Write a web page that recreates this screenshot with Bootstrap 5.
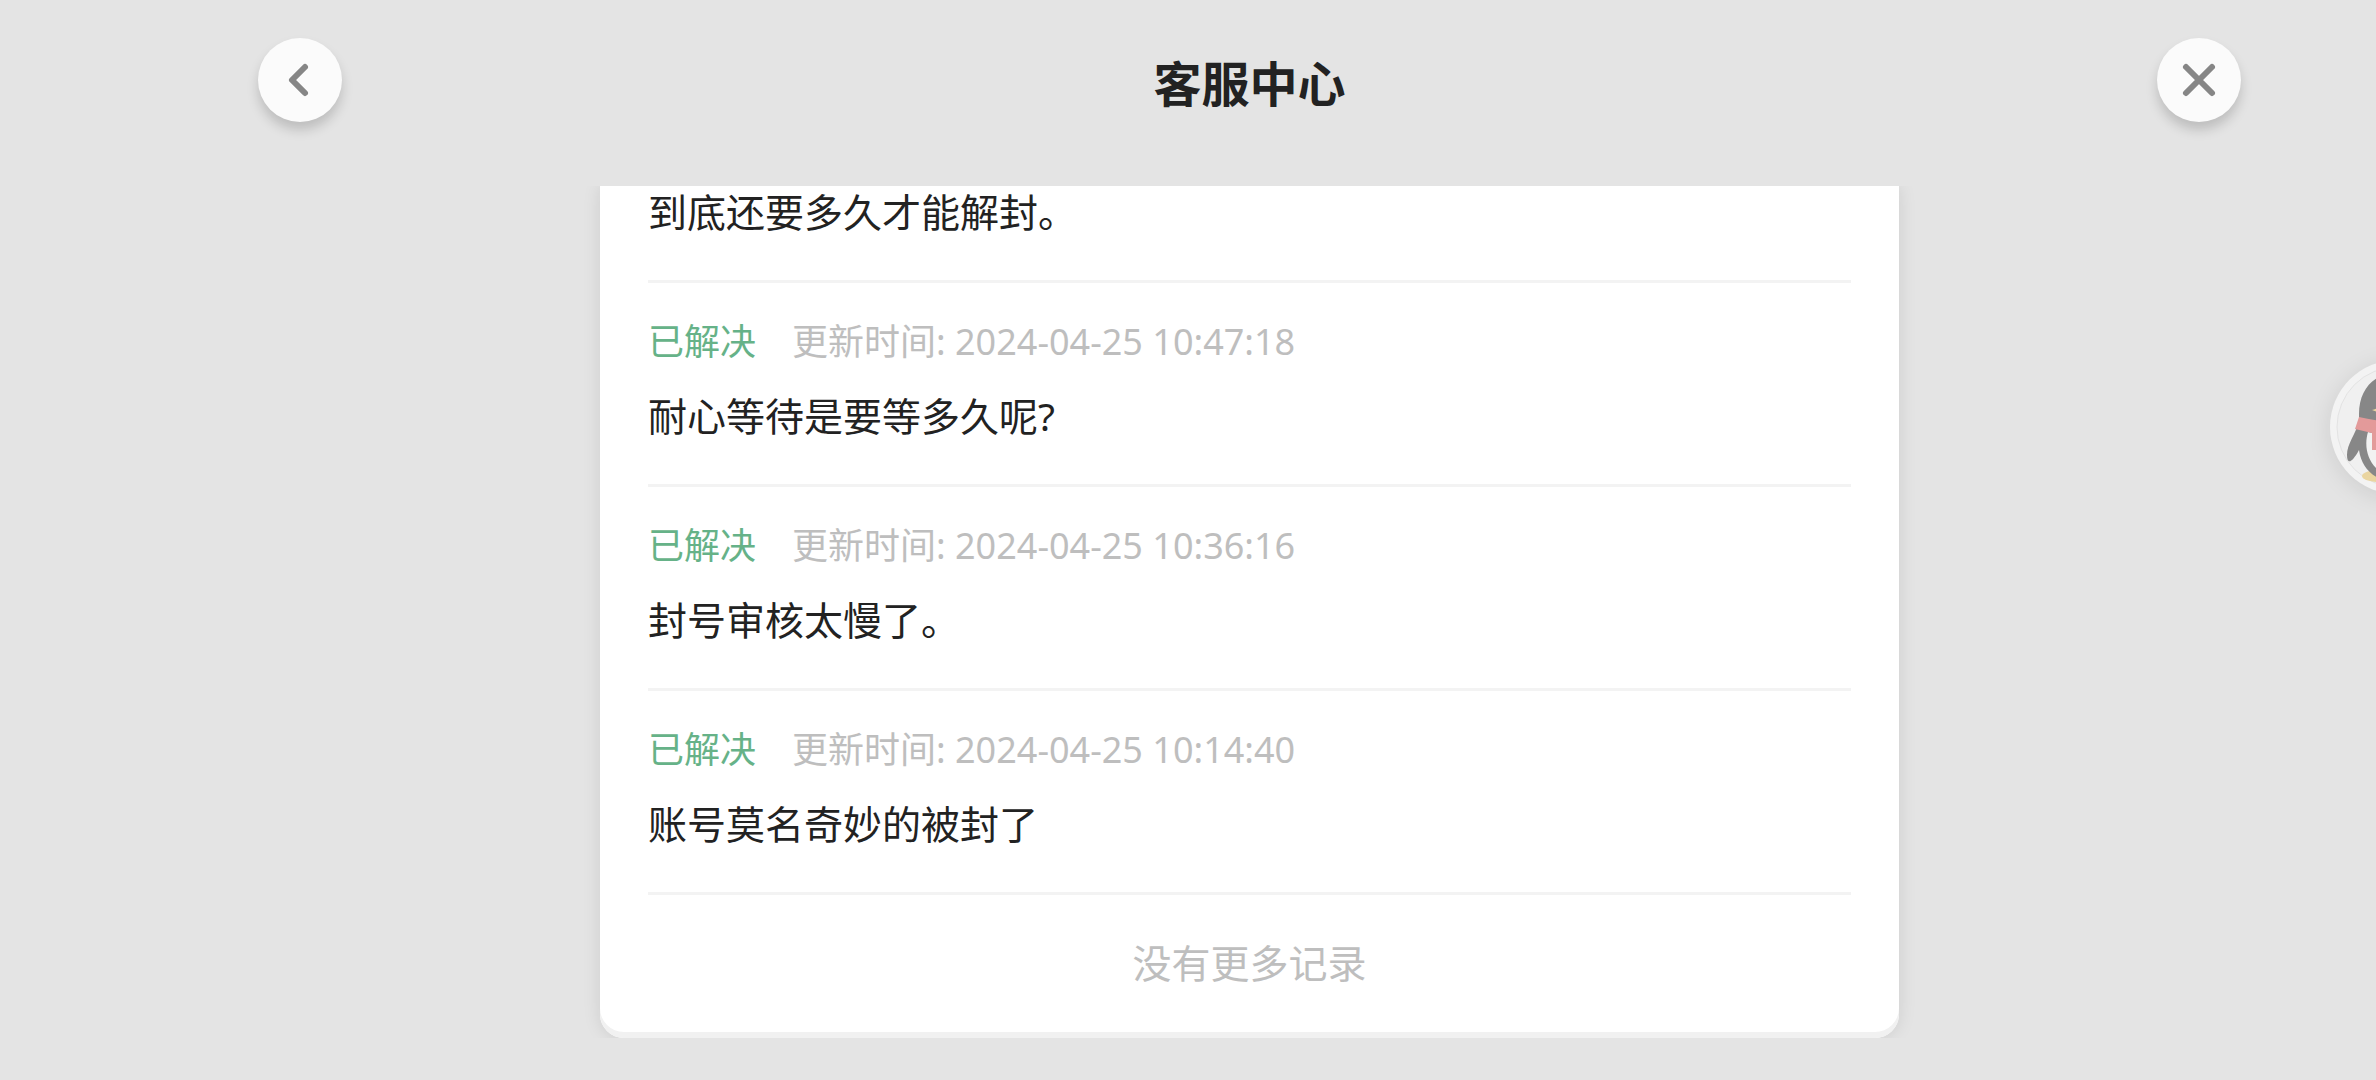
<!DOCTYPE html>
<html lang="zh-CN">
<head>
<meta charset="utf-8">
<meta name="viewport" content="width=device-width, initial-scale=1">
<title>客服中心</title>
<link href="https://cdn.jsdelivr.net/npm/bootstrap@5.3.0/dist/css/bootstrap.min.css" rel="stylesheet">
<style>
body{background:#e4e4e4;color:#222;font-family:"Noto Sans","Noto Sans CJK SC",sans-serif}
.app-shell{padding:0 135px 42px 258px}
.app-bar{padding-top:38px;height:186px}
.app-title{font-size:48px;line-height:60px;font-weight:700;padding-top:16px}
.round-btn{width:84px;height:84px;background:#fbfbfb;color:#868686;box-shadow:0 8px 12px rgba(0,0,0,.17)}
.round-btn:hover{background:#fff;color:#868686}
.records{margin:0 342px;border-radius:0 0 24px 24px;background:#fff;box-shadow:inset 0 -6px #f1f1f1,0 0 18px rgba(0,0,0,.1);clip-path:inset(0 -24px 0 -24px);padding:0 48px 6px}
.record{padding:35px 0 42px;border-bottom:3px solid #f3f3f3}
.record-first{padding-top:0}
.record-meta{gap:36px;font-size:36px;line-height:48px;color:#bebebe;margin-bottom:24px}
.state-done{color:#66b288}
.record-text,.records-end{font-size:39px;line-height:52px}
.records-end{padding:42px 0;color:#bebebe}
.assistant{right:-88px;top:360px;width:134px;height:134px;background:#f3f3f3;box-shadow:0 4px 24px rgba(0,0,0,.1)}
</style>
<script src="https://cdn.jsdelivr.net/npm/bootstrap@5.3.0/dist/js/bootstrap.bundle.min.js"></script>
</head>
<body class="position-relative overflow-hidden">
<div class="app-shell d-flex flex-column vh-100">
  <header class="app-bar d-flex justify-content-between align-items-start flex-shrink-0">
    <button type="button" class="round-btn btn rounded-circle border-0 p-0 d-flex" aria-label="返回">
      <svg width="84" height="84" viewBox="0 0 84 84" fill="none" stroke="currentColor" stroke-width="6" stroke-linecap="round" stroke-linejoin="round"><path d="M47 29 34 42 47 55"/></svg>
    </button>
    <h1 class="app-title mb-0">客服中心</h1>
    <button type="button" class="round-btn btn rounded-circle border-0 p-0 d-flex" aria-label="关闭">
      <svg width="84" height="84" viewBox="0 0 84 84" fill="none" stroke="currentColor" stroke-width="6" stroke-linecap="round"><path d="M29 29 55 55M55 29 29 55"/></svg>
    </button>
  </header>
  <main class="records flex-grow-1">
    <ul class="list-unstyled mb-0">
      <li class="record record-first"><p class="record-text mb-0">到底还要多久才能解封。</p></li>
      <li class="record">
        <div class="record-meta d-flex"><span class="state-done">已解决</span><span>更新时间: 2024-04-25 10:47:18</span></div>
        <p class="record-text mb-0">耐心等待是要等多久呢?</p>
      </li>
      <li class="record">
        <div class="record-meta d-flex"><span class="state-done">已解决</span><span>更新时间: 2024-04-25 10:36:16</span></div>
        <p class="record-text mb-0">封号审核太慢了。</p>
      </li>
      <li class="record">
        <div class="record-meta d-flex"><span class="state-done">已解决</span><span>更新时间: 2024-04-25 10:14:40</span></div>
        <p class="record-text mb-0">账号莫名奇妙的被封了</p>
      </li>
    </ul>
    <p class="records-end text-center mb-0">没有更多记录</p>
  </main>
</div>
<button type="button" class="assistant btn rounded-circle border-0 p-0 position-absolute" aria-label="助手">
  <svg class="d-block" width="134" height="134" viewBox="0 0 134 134">
    <circle cx="67" cy="67" r="60" fill="#f0f0f0" stroke="#e3e3e3"/>
    <ellipse cx="49" cy="116" rx="17" ry="6" fill="#ead5a0"/><ellipse cx="85" cy="116" rx="17" ry="6" fill="#ead5a0"/>
    <path d="M67 13C44 13 29 29 29 54L29 62C25 75 17 84 17 95C17 105 22 103 29 90C31 104 38 113 50 119H84C96 113 103 104 105 90C112 103 117 105 117 95C117 84 109 75 105 62V54C105 29 90 13 67 13Z" fill="#878787"/>
    <path d="M38 72Q67 80 96 72C102 92 92 115 67 117C42 115 32 92 38 72Z" fill="#f2f2f2"/>
    <path d="M29 57Q67 66 105 57L109 69Q80 77 56 75V90H42V73L25 69Z" fill="#e39a9a"/>
    <path d="M42 50Q67 41 92 50Q67 60 42 50Z" fill="#ead5a0"/>
    <ellipse cx="57" cy="34" rx="7" ry="10" fill="#f3f3f3"/><ellipse cx="77" cy="34" rx="7" ry="10" fill="#f3f3f3"/>
    <circle cx="59" cy="36" r="3" fill="#777"/><circle cx="75" cy="36" r="3" fill="#777"/>
  </svg>
</button>
</body>
</html>
